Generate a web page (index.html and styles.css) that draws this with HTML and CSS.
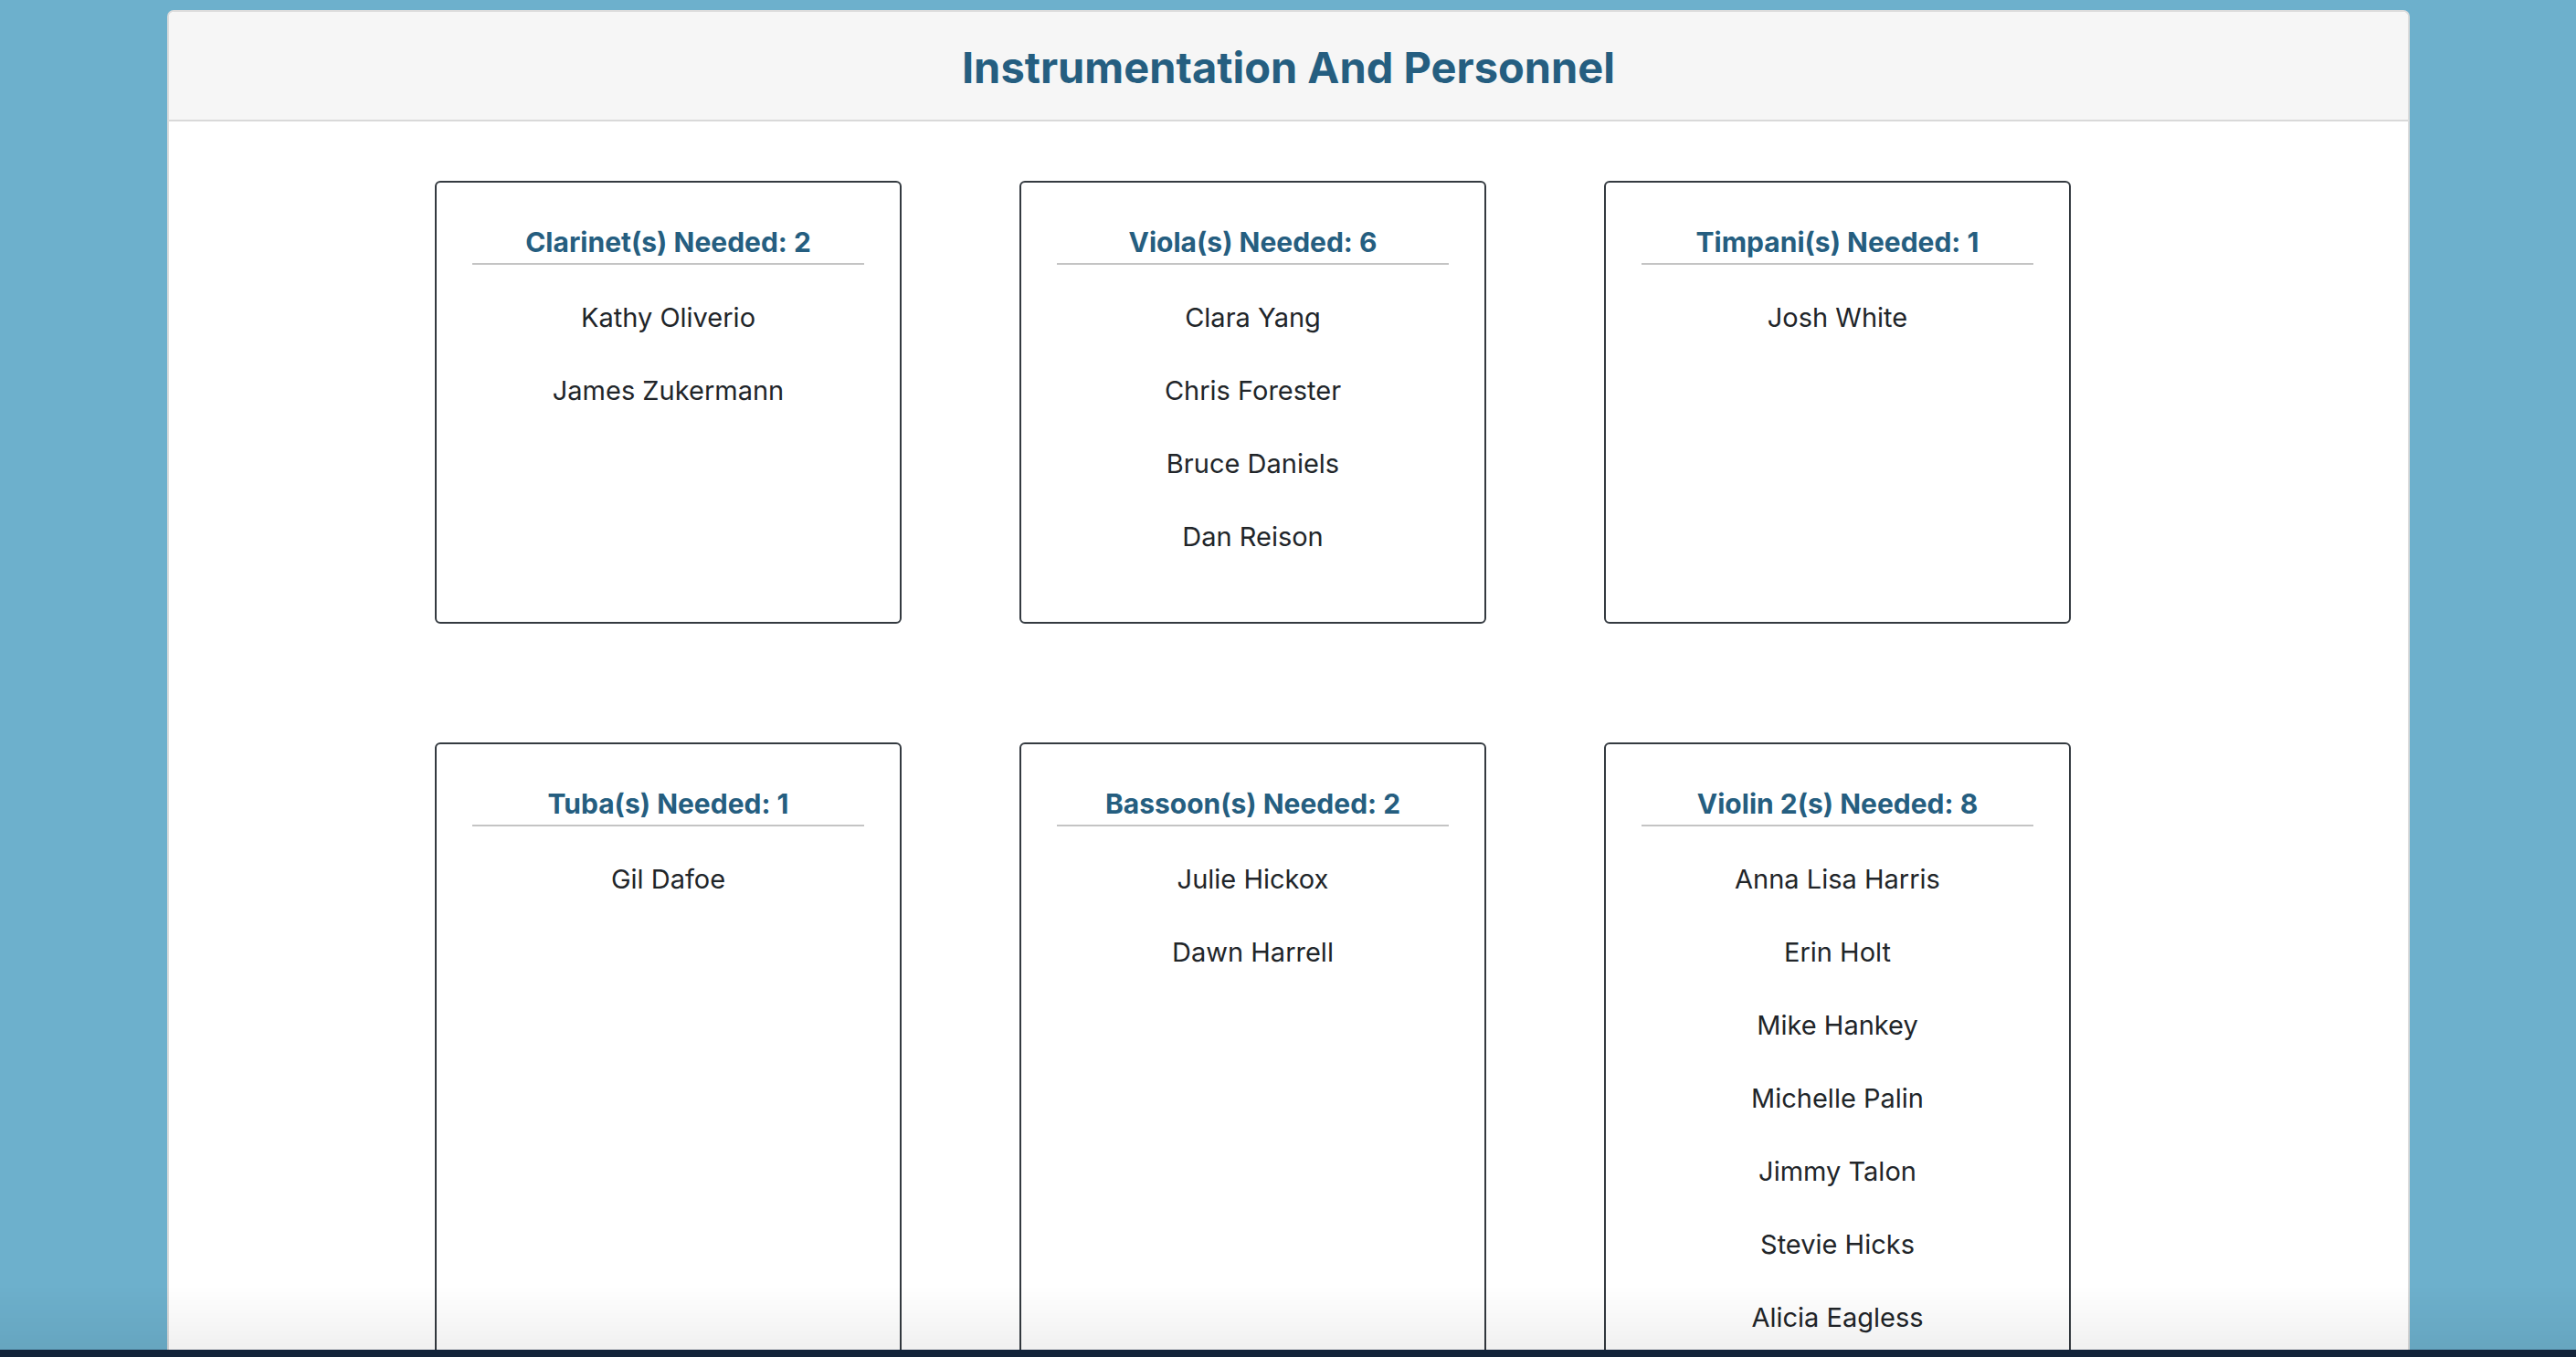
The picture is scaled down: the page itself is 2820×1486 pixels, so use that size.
FILE: index.html
```html
<!DOCTYPE html>
<html lang="en">
<head>
<meta charset="utf-8">
<title>Instrumentation And Personnel</title>
<link rel="stylesheet" href="styles.css">
</head>
<body>
<main class="panel">
  <header class="panel-header">
    <h1 class="title">Instrumentation And Personnel</h1>
  </header>
  <section class="cards">
    <article class="card">
      <h2 class="card-title">Clarinet(s) Needed: 2</h2>
      <ul class="names">
        <li>Kathy Oliverio</li>
        <li>James Zukermann</li>
      </ul>
    </article>
    <article class="card">
      <h2 class="card-title">Viola(s) Needed: 6</h2>
      <ul class="names">
        <li>Clara Yang</li>
        <li>Chris Forester</li>
        <li>Bruce Daniels</li>
        <li>Dan Reison</li>
      </ul>
    </article>
    <article class="card">
      <h2 class="card-title">Timpani(s) Needed: 1</h2>
      <ul class="names">
        <li>Josh White</li>
      </ul>
    </article>
    <article class="card">
      <h2 class="card-title">Tuba(s) Needed: 1</h2>
      <ul class="names">
        <li>Gil Dafoe</li>
      </ul>
    </article>
    <article class="card">
      <h2 class="card-title">Bassoon(s) Needed: 2</h2>
      <ul class="names">
        <li>Julie Hickox</li>
        <li>Dawn Harrell</li>
      </ul>
    </article>
    <article class="card">
      <h2 class="card-title">Violin 2(s) Needed: 8</h2>
      <ul class="names">
        <li>Anna Lisa Harris</li>
        <li>Erin Holt</li>
        <li>Mike Hankey</li>
        <li>Michelle Palin</li>
        <li>Jimmy Talon</li>
        <li>Stevie Hicks</li>
        <li>Alicia Eagless</li>
      </ul>
    </article>
  </section>
</main>
<div class="fade"></div>
<div class="dock-edge"></div>
</body>
</html>
```

FILE: styles.css
```css
html, body {
  margin: 0;
  padding: 0;
}

body {
  background: #6db0cc;
  font-family: Inter, Roboto, "Liberation Sans", sans-serif;
  color: #212529;
  height: 1486px;
  overflow: hidden;
  padding: 11px 182px 0 183px;
  box-sizing: border-box;
}

.panel {
  background: #ffffff;
  border: 2px solid #dcdcdc;
  border-bottom: none;
  border-radius: 7px 7px 0 0;
  min-height: 1600px;
}

.panel-header {
  background: #f6f6f6;
  border-bottom: 2px solid #d9d9d9;
  border-radius: 6px 6px 0 0;
  height: 118px;
  display: flex;
  align-items: center;
  justify-content: center;
}

.title {
  margin: 0;
  font-size: 47px;
  font-weight: 700;
  color: #255e80;
  transform: translateY(1px);
}

.cards {
  display: grid;
  grid-template-columns: repeat(3, 511px);
  grid-template-rows: 485px 760px;
  column-gap: 129px;
  row-gap: 130px;
  padding: 65px 0 0 291px;
}

.card {
  border: 2px solid #343a40;
  border-radius: 6px;
  box-sizing: border-box;
  padding: 0 39px;
  text-align: center;
}

.card-title {
  margin: 47px 0 0;
  font-size: 30px;
  line-height: 36px;
  font-weight: 700;
  color: #255e80;
  padding-bottom: 5px;
  border-bottom: 2px solid #c4c4c4;
}

.names {
  list-style: none;
  margin: 36px 0 0;
  padding: 0;
  display: flex;
  flex-direction: column;
  gap: 37px;
}

.names li {
  font-size: 29px;
  line-height: 43px;
}

.fade {
  position: fixed;
  left: 0;
  right: 0;
  bottom: 8px;
  height: 70px;
  background: linear-gradient(to bottom, rgba(0,0,0,0), rgba(0,0,0,0.06));
  pointer-events: none;
}

.dock-edge {
  position: fixed;
  left: 0;
  right: 0;
  bottom: 0;
  height: 8px;
  background: #13243a;
}
```
